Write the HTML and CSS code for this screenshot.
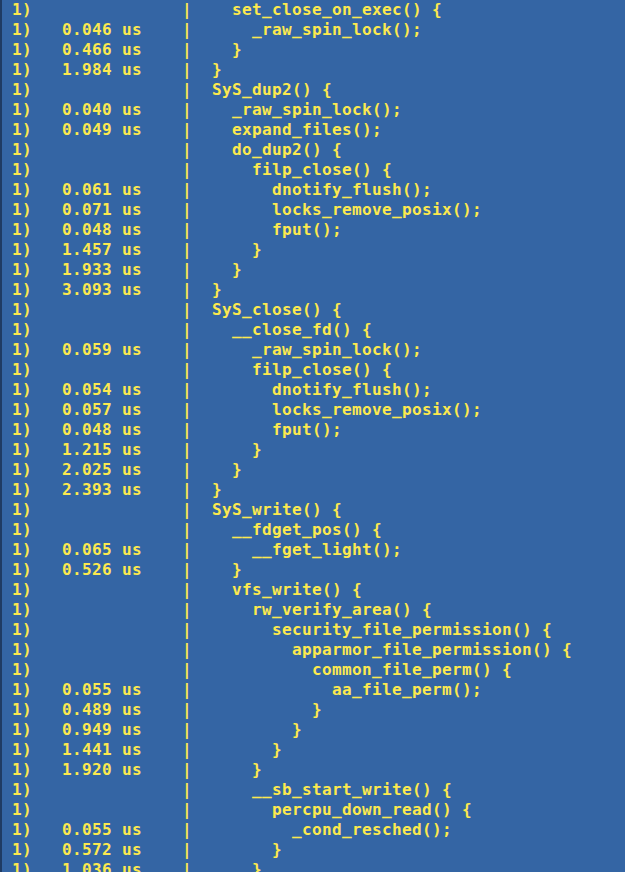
FILE: index.html
```html
<!DOCTYPE html>
<html>
<head>
<meta charset="utf-8">
<link rel="stylesheet" href="styles.css">
</head>
<body>
<div class="term">
<pre class="trace"> 1)               |    set_close_on_exec() {
 1)   0.046 us    |      _raw_spin_lock();
 1)   0.466 us    |    }
 1)   1.984 us    |  }
 1)               |  SyS_dup2() {
 1)   0.040 us    |    _raw_spin_lock();
 1)   0.049 us    |    expand_files();
 1)               |    do_dup2() {
 1)               |      filp_close() {
 1)   0.061 us    |        dnotify_flush();
 1)   0.071 us    |        locks_remove_posix();
 1)   0.048 us    |        fput();
 1)   1.457 us    |      }
 1)   1.933 us    |    }
 1)   3.093 us    |  }
 1)               |  SyS_close() {
 1)               |    __close_fd() {
 1)   0.059 us    |      _raw_spin_lock();
 1)               |      filp_close() {
 1)   0.054 us    |        dnotify_flush();
 1)   0.057 us    |        locks_remove_posix();
 1)   0.048 us    |        fput();
 1)   1.215 us    |      }
 1)   2.025 us    |    }
 1)   2.393 us    |  }
 1)               |  SyS_write() {
 1)               |    __fdget_pos() {
 1)   0.065 us    |      __fget_light();
 1)   0.526 us    |    }
 1)               |    vfs_write() {
 1)               |      rw_verify_area() {
 1)               |        security_file_permission() {
 1)               |          apparmor_file_permission() {
 1)               |            common_file_perm() {
 1)   0.055 us    |              aa_file_perm();
 1)   0.489 us    |            }
 1)   0.949 us    |          }
 1)   1.441 us    |        }
 1)   1.920 us    |      }
 1)               |      __sb_start_write() {
 1)               |        percpu_down_read() {
 1)   0.055 us    |          _cond_resched();
 1)   0.572 us    |        }
 1)   1.036 us    |      }</pre>
</div>
</body>
</html>
```
FILE: styles.css
```css
html, body {
  margin: 0;
  padding: 0;
  background: #3465a4;
  height: 100%;
  overflow: hidden;
}
.term {
  box-sizing: border-box;
  height: 872px;
  border-left: 2px solid #1f3b63;
  background: #3465a4;
  overflow: hidden;
}
.trace {
  margin: 0;
  font-family: "DejaVu Sans Mono", monospace;
  font-weight: bold;
  font-size: 16px;
  letter-spacing: 0.367px;
  line-height: 20px;
  color: #fce94f;
  white-space: pre;
}
```
